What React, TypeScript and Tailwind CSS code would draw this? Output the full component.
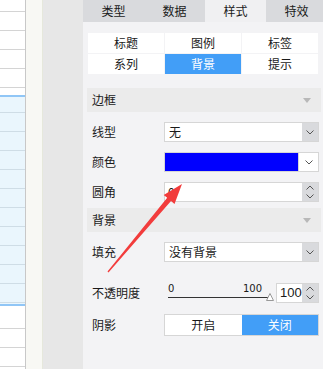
import React from "react";

const font = "font-['Noto_Sans_CJK_SC','Microsoft_YaHei',sans-serif]";

function Chevron({ up = false }: { up?: boolean }) {
  return (
    <svg width="8" height="5" viewBox="0 0 8 5" className="block">
      <path
        d={up ? "M0.5 4.5 L4 1 L7.5 4.5" : "M0.5 0.5 L4 4 L7.5 0.5"}
        fill="none"
        stroke="#555"
        strokeWidth="1"
      />
    </svg>
  );
}

function Spinner() {
  return (
    <div className="w-[16px] shrink-0 bg-[#d9dadd] flex flex-col items-center justify-center gap-[4px]">
      <Chevron up />
      <Chevron />
    </div>
  );
}

function Select({ value }: { value: string }) {
  return (
    <div className="w-[155px] h-[20px] flex border border-[#d6d6d6] bg-white">
      <div className="flex-1 pl-[4px] leading-[18px]">{value}</div>
      <div className="w-[16px] bg-[#d9dadd] flex items-center justify-center">
        <Chevron />
      </div>
    </div>
  );
}

function Row({ label, children, className = "" }: { label: string; children: React.ReactNode; className?: string }) {
  return (
    <div className={`flex items-center pl-[9px] ${className}`}>
      <div className="w-[72px] shrink-0">{label}</div>
      {children}
    </div>
  );
}

function Section({ title, className = "" }: { title: string; className?: string }) {
  return (
    <div className={`ml-[4px] w-[234px] h-[24px] bg-[#ebebeb] flex items-center justify-between pl-[5px] pr-[10px] ${className}`}>
      <span>{title}</span>
      <svg width="8" height="5" viewBox="0 0 8 5">
        <path d="M0 0 H8 L4 5 Z" fill="#b8b8b8" />
      </svg>
    </div>
  );
}

function LeftCells() {
  return (
    <div className="w-[26px] shrink-0 border-r border-[#c8c8c8] bg-white flex flex-col">
      <div className="h-[12px] border-b border-[#d4d4d4]" />
      <div className="h-[19px] border-b border-[#d4d4d4]" />
      <div className="h-[19px] border-b border-[#d4d4d4]" />
      <div className="h-[19px] border-b border-[#d4d4d4]" />
      <div className="h-[19px] border-b border-[#d4d4d4]" />
      <div className="h-[7px]" />
      <div className="border-y-2 border-[#90c6f6] bg-[#eaf6fd] flex flex-col">
        <div className="h-[16px] border-b border-[#cfdde6]" />
        <div className="h-[19px] border-b border-[#cfdde6]" />
        <div className="h-[19px] border-b border-[#cfdde6]" />
        <div className="h-[19px] border-b border-[#cfdde6]" />
        <div className="h-[19px] border-b border-[#cfdde6]" />
        <div className="h-[19px] border-b border-[#cfdde6]" />
        <div className="h-[19px] border-b border-[#cfdde6]" />
        <div className="h-[19px] border-b border-[#cfdde6]" />
        <div className="h-[19px] border-b border-[#cfdde6]" />
        <div className="h-[19px] border-b border-[#cfdde6]" />
        <div className="h-[19px] border-b border-[#cfdde6]" />
        <div className="h-[1px]" />
      </div>
      <div className="h-[23px] border-b border-[#d4d4d4]" />
      <div className="h-[19px] border-b border-[#d4d4d4]" />
      <div className="h-[19px] border-b border-[#d4d4d4]" />
    </div>
  );
}

export default function App() {
  const tabs = ["类型", "数据", "样式", "特效"];
  const subs = ["标题", "图例", "标签", "系列", "背景", "提示"];

  return (
    <div className={`relative w-[323px] h-[369px] flex overflow-hidden text-[12px] text-[#1a1a1a] ${font}`}>
      <LeftCells />
      <div className="w-[17px] shrink-0 bg-[#f8f8f4] border-r border-[#e6e8dc]" />
      <div className="w-[40px] shrink-0 bg-[#e7e7e7]" />

      <div className="flex-1 bg-[#f3f3f5] overflow-hidden">
        <div className="h-[22px] flex bg-[#d9dadd]">
          {tabs.map((t) => (
            <div
              key={t}
              className={`w-[61px] shrink-0 text-center leading-[22px] ${t === "样式" ? "bg-[#f0f0f2]" : ""}`}
            >
              {t}
            </div>
          ))}
        </div>

        <div className="mt-[11px] ml-[5px] w-[230px] grid grid-cols-3 gap-[1px]">
          {subs.map((s) => (
            <div
              key={s}
              className={`h-[20px] text-center leading-[20px] ${s === "背景" ? "bg-[#429ef7] text-white" : "bg-white"}`}
            >
              {s}
            </div>
          ))}
        </div>

        <Section title="边框" className="mt-[14px]" />

        <Row label="线型" className="mt-[10px] h-[20px]">
          <Select value="无" />
        </Row>

        <Row label="颜色" className="mt-[10px] h-[20px]">
          <div className="w-[155px] h-[20px] flex border border-[#d6d6d6] bg-white">
            <div className="w-[133px] bg-[#0000ff]" />
            <div className="flex-1 border-l border-[#d6d6d6] flex items-center justify-center">
              <Chevron />
            </div>
          </div>
        </Row>

        <Row label="圆角" className="mt-[10px] h-[20px]">
          <div className="w-[155px] h-[20px] flex border border-[#d6d6d6] bg-white">
            <div className="flex-1 pl-[3px] leading-[18px]">0</div>
            <Spinner />
          </div>
        </Row>

        <Section title="背景" className="mt-[6px]" />

        <Row label="填充" className="mt-[10px] h-[20px]">
          <Select value="没有背景" />
        </Row>

        <Row label="不透明度" className="mt-[21px] h-[20px]">
          <div className="relative w-[108px] h-[20px] shrink-0">
            <span className="absolute left-[4px] top-[1px] text-[10px] leading-[10px] font-['DejaVu_Sans',sans-serif]">0</span>
            <span className="absolute left-[79px] top-[1px] text-[10px] leading-[10px] font-['DejaVu_Sans',sans-serif]">100</span>
            <div className="absolute left-[4px] top-[14px] w-[100px] h-[1px] bg-[#333]" />
            <svg className="absolute left-[102px] top-[10px]" width="8" height="8" viewBox="0 0 8 8">
              <path d="M4 0.5 L7.5 7.5 H0.5 Z" fill="#fff" stroke="#999" strokeWidth="1" />
            </svg>
          </div>
          <div className="ml-[4px] w-[43px] h-[20px] flex border border-[#d6d6d6] bg-white">
            <div className="flex-1 pl-[3px] text-[13px] leading-[18px] font-['Liberation_Sans',sans-serif]">100</div>
            <Spinner />
          </div>
        </Row>

        <Row label="阴影" className="mt-[11px] h-[22px]">
          <div className="w-[155px] h-[22px] flex border border-[#d6d6d6] bg-white">
            <div className="flex-1 text-center leading-[20px]">开启</div>
            <div className="flex-1 text-center leading-[20px] bg-[#429ef7] text-white">关闭</div>
          </div>
        </Row>
      </div>

      <svg className="absolute left-0 top-0 pointer-events-none" width="323" height="369" viewBox="0 0 323 369">
        <polygon
          points="108.5,272.4 171,201 174.5,203.9 182,184 163.7,194.9 167.2,197.8 107.5,271.6"
          fill="#f23c3c"
        />
      </svg>
    </div>
  );
}
